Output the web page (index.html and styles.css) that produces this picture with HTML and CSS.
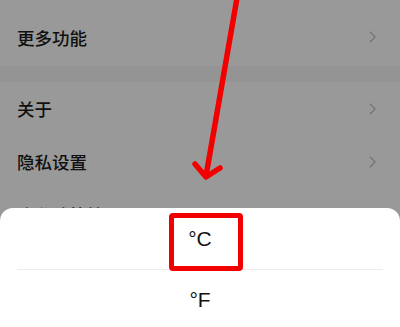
FILE: index.html
```html
<!DOCTYPE html>
<html lang="zh-CN">
<head>
  <meta charset="UTF-8" />
  <meta name="viewport" content="width=device-width, initial-scale=1.0" />
  <title>设置</title>
  <link rel="stylesheet" href="styles.css">
</head>
<body>

  <!-- SETTINGS LIST -->
  <div class="list">
    <div class="row row-first">
      <span>更多功能</span>
      <svg class="chev" viewBox="0 0 8 14"><path d="M1 1l6 6-6 6" /></svg>
    </div>
    <div class="gap"></div>
    <div class="row">
      <span>关于</span>
      <svg class="chev" viewBox="0 0 8 14"><path d="M1 1l6 6-6 6" /></svg>
    </div>
    <div class="row">
      <span>隐私设置</span>
      <svg class="chev" viewBox="0 0 8 14"><path d="M1 1l6 6-6 6" /></svg>
    </div>
    <div class="row">
      <span>隐私政策管理</span>
      <svg class="chev" viewBox="0 0 8 14"><path d="M1 1l6 6-6 6" /></svg>
    </div>
  </div>

  <!-- DIM MASK -->
  <div class="mask"></div>

  <!-- UNIT PICKER SHEET -->
  <div class="sheet">
    <div class="option option-top">°C</div>
    <div class="option">°F</div>
  </div>

  <!-- ANNOTATIONS -->
  <svg class="arrow" viewBox="0 0 400 327">
    <path d="M237 -2 L206 176" />
    <path d="M195 164 L206 177 L220 168" />
  </svg>
  <div class="highlight"></div>

</body>
</html>
```

FILE: styles.css
```css
/* RESET */
*, *::before, *::after {
  box-sizing: border-box;
  margin: 0;
  padding: 0;
}

body {
  font-family: 'Noto Sans CJK SC', 'Noto Sans', sans-serif;
  background-color: #fff;
  color: #1c1c1c;
  width: 400px;
  height: 327px;
  overflow: hidden;
}

/* LIST */
.list {
  background-color: #fff;
}

.row {
  display: flex;
  justify-content: space-between;
  align-items: center;
  height: 53px;
  padding: 0 24px 0 17px;
  font-size: 17.5px;
  font-weight: 500;
}

.row-first {
  height: 55px;
  margin-top: 11px;
  padding-bottom: 3px;
}

.gap {
  height: 16px;
  background-color: #f7f7f7;
}

.chev {
  width: 7px;
  height: 12px;
}

.chev path {
  fill: none;
  stroke: #c4c4c4;
  stroke-width: 1.6;
}

/* MASK */
.mask {
  position: fixed;
  inset: 0;
  background: rgba(0, 0, 0, 0.4);
}

/* SHEET */
.sheet {
  position: fixed;
  left: 0;
  right: 0;
  top: 208px;
  bottom: 0;
  background: #fff;
  border-radius: 13px 13px 0 0;
  padding: 0 17px;
}

.option {
  display: flex;
  justify-content: center;
  align-items: center;
  height: 62px;
  font-family: 'Liberation Sans', Arial, sans-serif;
  font-size: 21px;
  color: #111;
}

.option-top {
  border-bottom: 1px solid #ececec;
}

.option + .option {
  height: 60px;
}

/* ANNOTATIONS */
.arrow {
  position: fixed;
  left: 0;
  top: 0;
  width: 400px;
  height: 327px;
}

.arrow path {
  fill: none;
  stroke: #f20000;
  stroke-width: 5.5;
  stroke-linecap: round;
  stroke-linejoin: round;
}

.highlight {
  position: fixed;
  left: 169px;
  top: 213px;
  width: 74px;
  height: 58px;
  border: 5px solid #f20000;
  border-radius: 4px;
}
```
